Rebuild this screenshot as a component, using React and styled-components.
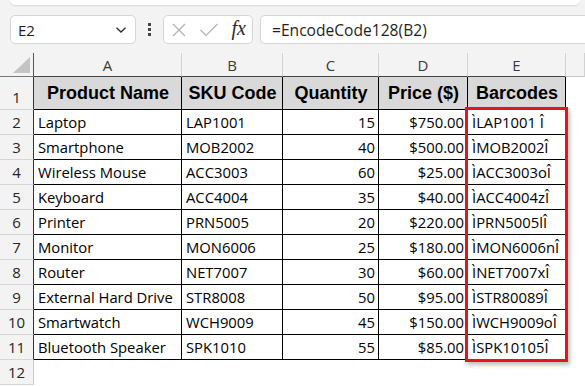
import React from 'react';
import styled, { createGlobalStyle } from 'styled-components';

const GlobalStyle = createGlobalStyle`
  html, body { margin: 0; padding: 0; }
  body { background: #f3f3f3; }
`;

const Page = styled.div`
  width: 585px;
  height: 386px;
  overflow: hidden;
  background: #f3f3f3;
  display: flex;
  flex-direction: column;
  font-family: "Open Sans", "Liberation Sans", sans-serif;
`;

const RibbonEdge = styled.div`
  height: 5px;
  margin: 0 5px 0 10px;
  background: #ffffff;
  border-radius: 0 0 7px 7px;
  box-shadow: 0 1px 2px rgba(0, 0, 0, 0.12);
`;

const FormulaBar = styled.div`
  display: flex;
  align-items: center;
  padding: 10px 0 9px 10px;
`;

const Field = styled.div`
  height: 29px;
  box-sizing: border-box;
  background: #ffffff;
  border: 1px solid #d6d6d6;
  border-radius: 5px;
  display: flex;
  align-items: center;
`;

const NameBox = styled(Field)`
  width: 126px;
  padding: 0 8px 0 7px;
  justify-content: space-between;
  font-size: 15px;
  color: #1f1f1f;
`;

const Dots = styled.div`
  width: 27px;
  display: flex;
  flex-direction: column;
  align-items: center;
  gap: 2px;

  span {
    width: 3px;
    height: 3px;
    background: #444;
  }
`;

const FxBox = styled(Field)`
  width: 90px;
  margin-right: 7px;
  padding: 0 6px 0 7px;
  justify-content: space-between;
`;

const FxLabel = styled.span`
  font-family: "Liberation Serif", serif;
  font-style: italic;
  font-size: 20px;
  color: #2a2a2a;
  padding-bottom: 2px;
`;

const FormulaInput = styled(Field)`
  flex: 1;
  border-right: none;
  border-radius: 5px 0 0 5px;
  padding-left: 11px;
  font-size: 15.6px;
  color: #1f1f1f;
`;

const Sheet = styled.div`
  position: relative;
  flex: 1;
  display: grid;
  grid-template-columns: 34px 148px 101px 96px 89px 98px 1fr;
  grid-template-rows: 24px 33px repeat(11, 25px);
  background: #ffffff;
`;

const Corner = styled.div`
  background: #f3f3f3;
  border-right: 1px solid #555;
  border-bottom: 1px solid #777;
  display: flex;
  align-items: flex-end;
  justify-content: flex-end;
  padding: 0 3px 3px 0;
`;

const ColHead = styled.div`
  background: #f3f3f3;
  border-right: 1px solid #d2d2d2;
  border-bottom: 1px solid ${p => (p.$last ? '#c8c8c8' : '#444')};
  display: flex;
  align-items: center;
  justify-content: center;
  font-size: 15px;
  color: #3a3a3a;
`;

const RowHead = styled.div`
  background: #f3f3f3;
  border-right: 1px solid ${p => (p.$inTable ? '#333' : '#c8c8c8')};
  border-bottom: 1px solid #d6d6d6;
  display: flex;
  align-items: ${p => (p.$tall ? 'flex-end' : 'center')};
  justify-content: center;
  padding-bottom: ${p => (p.$tall ? '2px' : '0')};
  font-size: 15px;
  color: #262626;
`;

const Cell = styled.div`
  border-right: 1px solid ${p => (p.$bordered ? '#000' : 'transparent')};
  border-bottom: 1px solid ${p => (p.$bordered ? '#000' : 'transparent')};
  background: ${p => (p.$header ? '#d9d9d9' : '#ffffff')};
  display: flex;
  align-items: center;
  justify-content: ${p => (p.$header ? 'center' : p.$right ? 'flex-end' : 'flex-start')};
  padding: 0 3px 0 4px;
  white-space: nowrap;
  overflow: hidden;
  font-family: ${p => (p.$header ? '"Liberation Sans", Arial, sans-serif' : '"Open Sans", sans-serif')};
  font-weight: ${p => (p.$header ? 700 : 400)};
  font-size: ${p => (p.$header ? '18px' : '14.8px')};
  color: #000;
`;

const Highlight = styled.div`
  position: absolute;
  left: 465px;
  top: 54px;
  width: 103px;
  height: 255px;
  box-sizing: border-box;
  border: 3px solid #e8141b;
  box-shadow: 2px 3px 4px rgba(0, 0, 0, 0.25);
  pointer-events: none;
`;

const headers = ['Product Name', 'SKU Code', 'Quantity', 'Price ($)', 'Barcodes'];

const rows = [
  ['Laptop', 'LAP1001', 15, '$750.00', 'ÌLAP1001 Î'],
  ['Smartphone', 'MOB2002', 40, '$500.00', 'ÌMOB2002Î'],
  ['Wireless Mouse', 'ACC3003', 60, '$25.00', 'ÌACC3003oÎ'],
  ['Keyboard', 'ACC4004', 35, '$40.00', 'ÌACC4004zÎ'],
  ['Printer', 'PRN5005', 20, '$220.00', 'ÌPRN5005lÎ'],
  ['Monitor', 'MON6006', 25, '$180.00', 'ÌMON6006nÎ'],
  ['Router', 'NET7007', 30, '$60.00', 'ÌNET7007xÎ'],
  ['External Hard Drive', 'STR8008', 50, '$95.00', 'ÌSTR80089Î'],
  ['Smartwatch', 'WCH9009', 45, '$150.00', 'ÌWCH9009oÎ'],
  ['Bluetooth Speaker', 'SPK1010', 55, '$85.00', 'ÌSPK10105Î'],
];

const Chevron = () => (
  <svg width="12" height="8" viewBox="0 0 12 8">
    <path d="M1.5 1.8 L6 6 L10.5 1.8" fill="none" stroke="#333" strokeWidth="1.4" />
  </svg>
);

const CancelIcon = () => (
  <svg width="16" height="16" viewBox="0 0 16 16">
    <path d="M2 2 L14 14 M14 2 L2 14" stroke="#b4b4b4" strokeWidth="1.2" />
  </svg>
);

const EnterIcon = () => (
  <svg width="20" height="16" viewBox="0 0 20 16">
    <path d="M1.5 8 L7 13.5 L18.5 2" fill="none" stroke="#b4b4b4" strokeWidth="1.2" />
  </svg>
);

const SelectAll = () => (
  <svg width="17" height="16" viewBox="0 0 17 16">
    <polygon points="17,0 17,16 0,16" fill="#c4c4c4" />
  </svg>
);

const App = () => {
  return (
    <Page>
      <GlobalStyle />
      <RibbonEdge />
      <FormulaBar>
        <NameBox>
          <span>E2</span>
          <Chevron />
        </NameBox>
        <Dots>
          <span />
          <span />
          <span />
        </Dots>
        <FxBox>
          <CancelIcon />
          <EnterIcon />
          <FxLabel>fx</FxLabel>
        </FxBox>
        <FormulaInput>=EncodeCode128(B2)</FormulaInput>
      </FormulaBar>
      <Sheet>
        <Corner>
          <SelectAll />
        </Corner>
        {['A', 'B', 'C', 'D', 'E', ''].map((l, i) => (
          <ColHead key={i} $last={i === 5}>{l}</ColHead>
        ))}

        <RowHead $inTable $tall>1</RowHead>
        {headers.map(h => (
          <Cell key={h} $header $bordered>{h}</Cell>
        ))}
        <Cell />

        {rows.map((r, i) => (
          <React.Fragment key={r[1]}>
            <RowHead $inTable>{i + 2}</RowHead>
            <Cell $bordered>{r[0]}</Cell>
            <Cell $bordered>{r[1]}</Cell>
            <Cell $bordered $right>{r[2]}</Cell>
            <Cell $bordered $right>{r[3]}</Cell>
            <Cell $bordered>{r[4]}</Cell>
            <Cell />
          </React.Fragment>
        ))}

        <RowHead>12</RowHead>
        <Cell />
        <Cell />
        <Cell />
        <Cell />
        <Cell />
        <Cell />

        <Highlight />
      </Sheet>
    </Page>
  );
};

export default App;
